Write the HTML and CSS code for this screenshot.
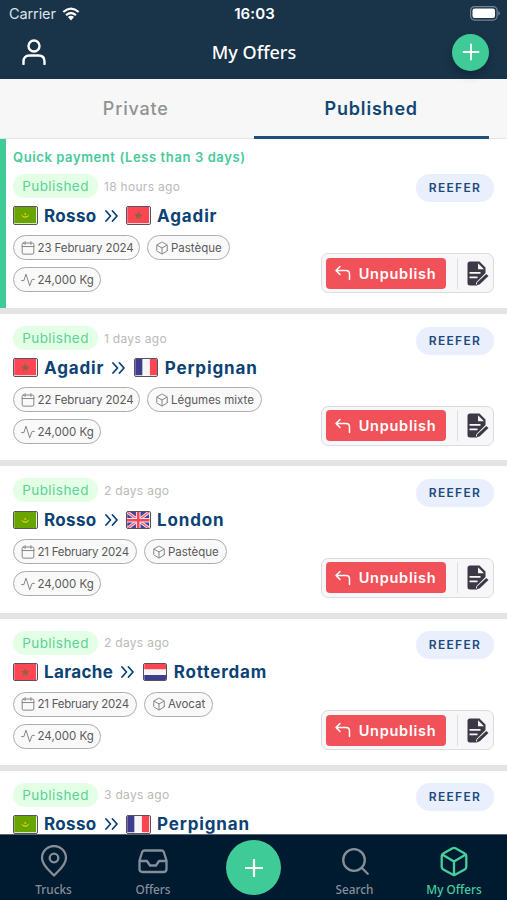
FILE: index.html
```html
<!DOCTYPE html>
<html lang="en">
<head>
    <meta charset="UTF-8">
    <title>My Offers</title>
    <link rel="stylesheet" href="styles.css">
</head>
<body>
    <!-- icons -->
    <svg class="sprite">
        <symbol id="calendar" viewBox="0 0 24 24"><rect x="2" y="3.500" width="20" height="19" rx="2"/><path d="M7 1v5M17 1v5M2 9.500h20"/></symbol>
        <symbol id="box" viewBox="0 0 24 24"><path d="M21 16V8a2 2 0 0 0-1-1.730l-7-4a2 2 0 0 0-2 0l-7 4A2 2 0 0 0 3 8v8a2 2 0 0 0 1 1.730l7 4a2 2 0 0 0 2 0l7-4A2 2 0 0 0 21 16z"/><path d="M3.300 7L12 12l8.700-5M12 22V12"/></symbol>
        <symbol id="pulse" viewBox="0 0 24 24"><path d="M1 13h4L8.500 2l6.500 20 4-11h4"/></symbol>
        <symbol id="chevrons" viewBox="0 0 14 14"><path d="M1 2l4.500 5L1 12M7.500 2L12 7l-4.500 5"/></symbol>
        <symbol id="back" viewBox="0 0 16 16"><path d="M5 1.500L1 5.500l4 4M1 5.500h10q3.500 0 3.500 3.500v5.500"/></symbol>
        <symbol id="edit" viewBox="0 0 22 25">
            <path fill="#3d3845" d="M3 .5h9.500l6 6V13l-7 7.500-1.500 4H3Q.5 24.500.5 22V3Q.5.500 3 .5z"/>
            <path fill="#f7f7f9" d="M11 2.300v6h6zM2.500 11h11v1.700h-11zM2.500 15.500h8v1.700h-8z"/>
            <path stroke="#f7f7f9" stroke-width="5.500" d="M12 22.500l8-8"/>
            <path fill="#3d3845" d="M19.300 13l2.200 2-8.700 8.300-3.300 1.200.9-3.300z"/>
        </symbol>
        <symbol id="mr" viewBox="0 0 24 18"><rect width="24" height="18" fill="#69a500"/><path d="M7.500 8a4.600 4.600 0 0 0 9 0a4.700 3.300 0 0 1-9 0z" fill="#e3cf16"/><circle cx="12" cy="7.500" r="1" fill="#e3cf16"/></symbol>
        <symbol id="ma" viewBox="0 0 24 18"><rect width="24" height="18" fill="#fd4654"/><path d="M12 4.500l1.300 3.100 3.400.2-2.600 2.200.8 3.200-2.900-1.700-2.900 1.700.8-3.200-2.600-2.200 3.400-.2z" fill="#8a6740"/></symbol>
        <symbol id="fr" viewBox="0 0 24 18"><path fill="#403c8e" d="M0 0h8v18H0z"/><path fill="#f5f5f5" d="M8 0h8v18H8z"/><path fill="#fb4553" d="M16 0h8v18h-8z"/></symbol>
        <symbol id="nl" viewBox="0 0 24 18"><path fill="#fb4553" d="M0 0h24v6H0z"/><path fill="#f5f5f5" d="M0 6h24v6H0z"/><path fill="#403c8e" d="M0 12h24v6H0z"/></symbol>
        <symbol id="gb" viewBox="0 0 24 18"><rect width="24" height="18" fill="#45449a"/><path stroke="#f2e6ee" stroke-width="3.400" d="M0 0l24 18M24 0L0 18"/><path stroke="#f4637a" stroke-width="1.500" d="M0 0l24 18M24 0L0 18"/><path stroke="#f2e6ee" stroke-width="5" d="M12 0v18M0 9h24"/><path stroke="#fb4553" stroke-width="2.800" d="M12 0v18M0 9h24"/></symbol>
    </svg>

    <header>
        <div class="status">
            <span class="carrier">Carrier</span>
            <svg class="wifi" viewBox="0 0 18 14"><path d="M1.300 5q7.700-6.800 15.400 0M4 8.200q5-4.400 10 0" fill="none" stroke="#fff" stroke-width="2.200"/><path d="M5.900 10.100q3.100-2.500 6.200 0L9 13.500z" fill="#fff"/></svg>
            <span class="time">16:03</span>
            <svg class="battery" viewBox="0 0 30 15"><rect x=".6" y=".6" width="26.500" height="13.500" rx="4" fill="none" stroke="#778593" stroke-width="1.200"/><rect x="2.500" y="2.500" width="22.500" height="9.500" rx="2" fill="#fff"/><path d="M28.300 5v4.500q1.500-.5 1.500-2.200T28.300 5z" fill="#778593"/></svg>
        </div>
        <div class="bar">
            <svg class="user" viewBox="0 0 24 26"><circle cx="12" cy="7" r="5.500"/><path d="M1.500 25v-2.500q0-6 6-6h9q6 0 6 6V25"/></svg>
            <h1>My Offers</h1>
            <button class="add"><svg viewBox="0 0 18 18"><path d="M9 1.500v15M1.500 9h15"/></svg></button>
        </div>
    </header>

    <div class="tabs">
        <div class="tab">Private</div>
        <div class="tab active">Published</div>
    </div>

    <main>
        <div class="card quick">
            <div class="info">
                <div class="payment">Quick payment (Less than 3 days)</div>
                <div class="state"><span class="badge">Published</span><span class="ago">18 hours ago</span></div>
                <div class="route"><svg class="flag"><use href="#mr"/></svg><b>Rosso</b><svg class="to"><use href="#chevrons"/></svg><svg class="flag"><use href="#ma"/></svg><b class="wide">Agadir</b></div>
                <div class="chips">
                    <span class="chip date"><svg><use href="#calendar"/></svg>23 February 2024</span>
                    <span class="chip goods"><svg><use href="#box"/></svg>Pastèque</span>
                    <span class="chip weight"><svg><use href="#pulse"/></svg>24,000 Kg</span>
                </div>
            </div>
            <div class="side">
                <span class="type">REEFER</span>
                <div class="actions"><button class="unpublish"><svg><use href="#back"/></svg>Unpublish</button><i></i><svg class="edit"><use href="#edit"/></svg></div>
            </div>
        </div>
        <div class="card">
            <div class="info">
                <div class="state"><span class="badge">Published</span><span class="ago">1 days ago</span></div>
                <div class="route"><svg class="flag"><use href="#ma"/></svg><b class="wide">Agadir</b><svg class="to"><use href="#chevrons"/></svg><svg class="flag"><use href="#fr"/></svg><b class="wide">Perpignan</b></div>
                <div class="chips">
                    <span class="chip date"><svg><use href="#calendar"/></svg>22 February 2024</span>
                    <span class="chip goods"><svg><use href="#box"/></svg>Légumes mixte</span>
                    <span class="chip weight"><svg><use href="#pulse"/></svg>24,000 Kg</span>
                </div>
            </div>
            <div class="side">
                <span class="type">REEFER</span>
                <div class="actions"><button class="unpublish"><svg><use href="#back"/></svg>Unpublish</button><i></i><svg class="edit"><use href="#edit"/></svg></div>
            </div>
        </div>
        <div class="card">
            <div class="info">
                <div class="state"><span class="badge">Published</span><span class="ago">2 days ago</span></div>
                <div class="route"><svg class="flag"><use href="#mr"/></svg><b>Rosso</b><svg class="to"><use href="#chevrons"/></svg><svg class="flag"><use href="#gb"/></svg><b class="wide">London</b></div>
                <div class="chips">
                    <span class="chip date short"><svg><use href="#calendar"/></svg>21 February 2024</span>
                    <span class="chip goods"><svg><use href="#box"/></svg>Pastèque</span>
                    <span class="chip weight"><svg><use href="#pulse"/></svg>24,000 Kg</span>
                </div>
            </div>
            <div class="side">
                <span class="type">REEFER</span>
                <div class="actions"><button class="unpublish"><svg><use href="#back"/></svg>Unpublish</button><i></i><svg class="edit"><use href="#edit"/></svg></div>
            </div>
        </div>
        <div class="card">
            <div class="info">
                <div class="state"><span class="badge">Published</span><span class="ago">2 days ago</span></div>
                <div class="route"><svg class="flag"><use href="#ma"/></svg><b>Larache</b><svg class="to"><use href="#chevrons"/></svg><svg class="flag"><use href="#nl"/></svg><b class="wide">Rotterdam</b></div>
                <div class="chips">
                    <span class="chip date short"><svg><use href="#calendar"/></svg>21 February 2024</span>
                    <span class="chip goods"><svg><use href="#box"/></svg>Avocat</span>
                    <span class="chip weight"><svg><use href="#pulse"/></svg>24,000 Kg</span>
                </div>
            </div>
            <div class="side">
                <span class="type">REEFER</span>
                <div class="actions"><button class="unpublish"><svg><use href="#back"/></svg>Unpublish</button><i></i><svg class="edit"><use href="#edit"/></svg></div>
            </div>
        </div>
        <div class="card">
            <div class="info">
                <div class="state"><span class="badge">Published</span><span class="ago">3 days ago</span></div>
                <div class="route"><svg class="flag"><use href="#mr"/></svg><b>Rosso</b><svg class="to"><use href="#chevrons"/></svg><svg class="flag"><use href="#fr"/></svg><b class="wide">Perpignan</b></div>
            </div>
            <div class="side">
                <span class="type">REEFER</span>
            </div>
        </div>
    </main>

    <nav>
        <a><svg viewBox="0 0 28 32"><path d="M14 30.500C10 26 2 20.500 2 13a12 12 0 0 1 24 0c0 7.500-8 13-12 17.500z"/><circle cx="14" cy="13" r="4.300"/></svg>Trucks</a>
        <a><svg viewBox="0 0 30 32"><path d="M1.500 16h7.500l3 4.500h6L21 16h7.500M6.500 5.500h17q1.600 0 2.300 1.500l2.700 8.500v8.500q0 3-3 3h-21q-3 0-3-3v-8.500L4.200 7q.7-1.500 2.300-1.500z"/></svg>Offers</a>
        <button class="plus"><svg viewBox="0 0 18 18"><path d="M9 .5v17M.5 9h17"/></svg></button>
        <a><svg viewBox="0 0 28 32"><circle cx="13" cy="15" r="10.800"/><path d="M20.700 22.700l6 6"/></svg>Search</a>
        <a class="on"><svg viewBox="0 0 28 32"><path d="M12.500 3.300q1.500-.8 3 0l9.200 5.300q1.600.9 1.600 2.700v10.400q0 1.800-1.600 2.700l-9.200 5.200q-1.500.8-3 0l-9.200-5.200q-1.600-.9-1.600-2.700V11.300q0-1.800 1.600-2.700zM2.200 9.600L14 16.400l11.800-6.800M14 30V16.400"/></svg>My Offers</a>
    </nav>
</body>
</html>
```
FILE: styles.css
```css
* {
    box-sizing: border-box;
}
body {
    display: flex;
    flex-direction: column;
    width: 507px;
    height: 900px;
    margin: 0;
    overflow: hidden;
    font-family: Inter, "Liberation Sans", sans-serif;
    background: #fff;
}
svg {
    display: block;
    flex: none;
    fill: none;
    stroke-linecap: round;
    stroke-linejoin: round;
}
.sprite {
    position: absolute;
    width: 0;
    height: 0;
}
button {
    display: flex;
    align-items: center;
    justify-content: center;
    padding: 0;
    border: 0;
    font-family: inherit;
    color: #fff;
}
header {
    flex: none;
    height: 79px;
    background: #193349;
    color: #fff;
}
.status {
    display: grid;
    grid-template-columns: 53px 1fr auto 1fr 30px;
    align-items: center;
    height: 27px;
    padding: 0 7px 0 9px;
}
.carrier {
    font-size: 14.500px;
    letter-spacing: -0.1px;
    color: #dbe2e8;
}
.wifi {
    width: 18px;
    height: 14px;
}
.wifi path {
    stroke-linecap: butt;
}
.time {
    margin-right: 23px;
    font-size: 15px;
    font-weight: 600;
    letter-spacing: 0.1px;
}
.battery {
    grid-column: 5;
    width: 30px;
    height: 15px;
}
.bar {
    display: grid;
    grid-template-columns: 37px 1fr 37px;
    align-items: center;
    height: 50px;
    padding: 0 18px 0 22px;
}
.user {
    width: 24px;
    height: 26px;
    stroke: #fff;
    stroke-width: 2.400;
}
h1 {
    margin: 0 3px 0 0;
    font: 500 18px "Noto Sans", sans-serif;
    text-align: center;
}
.add {
    width: 37px;
    height: 37px;
    border-radius: 50%;
    background: #3ecb98;
    box-shadow: 0 5px 8px rgba(0, 0, 0, 0.22);
    z-index: 1;
}
.add svg {
    width: 18px;
    stroke: #fff;
    stroke-width: 1.800;
}
.tabs {
    display: flex;
    flex: none;
    height: 60px;
    padding: 0 18px;
    background: #f7f7f7;
    border-bottom: 1px solid #e4e4e4;
}
.tab {
    flex: 1;
    padding-top: 18px;
    font-size: 18px;
    line-height: 23px;
    font-weight: 500;
    letter-spacing: 0.8px;
    text-align: center;
    color: #929292;
}
.active {
    height: 60px;
    border-bottom: 3px solid #1e4f7d;
    color: #134674;
    font-weight: 600;
}
main {
    flex: 1;
    min-height: 0;
    overflow: hidden;
    background: #e4e4e4;
}
.card {
    display: flex;
    justify-content: space-between;
    height: 146.300px;
    margin-bottom: 6px;
    padding: 12px 13px 0 13px;
    background: #fff;
}
.quick {
    height: 169px;
    padding: 11px 13px 0 7px;
    border-left: 6px solid #3fca98;
}
.info {
    width: 270px;
    flex: none;
}
.payment {
    height: 24px;
    font-size: 13px;
    font-weight: 600;
    line-height: 14px;
    letter-spacing: 0.6px;
    white-space: nowrap;
    color: #46ca9b;
}
.state {
    display: flex;
    align-items: center;
    height: 24px;
}
.badge {
    width: 85px;
    height: 24px;
    border-radius: 12px;
    background: #e3ffe6;
    color: #5cd296;
    font-size: 13.500px;
    line-height: 24px;
    letter-spacing: 0.45px;
    text-align: center;
}
.ago {
    margin-left: 6px;
    font-size: 12px;
    letter-spacing: 0.3px;
    color: #b9b9b9;
}
.route {
    display: flex;
    align-items: center;
    height: 35px;
}
.route b {
    margin-left: 6.500px;
    font-size: 17px;
    font-weight: 700;
    letter-spacing: 0.35px;
    color: #0c4275;
}
.route .wide {
    letter-spacing: 0.850px;
}
.flag {
    width: 24.500px;
    height: 18.500px;
    border: 1px solid #565261;
    border-radius: 2px;
}
.to {
    width: 14px;
    height: 14px;
    margin: 0 7.500px 0 8px;
    stroke: #0c4275;
    stroke-width: 1.800;
}
.chips {
    display: flex;
    flex-wrap: wrap;
    gap: 7px 6.500px;
    margin-top: 2px;
}
.chip {
    display: flex;
    align-items: center;
    height: 25px;
    padding: 0 7px;
    border: 1px solid #adadad;
    border-radius: 13px;
    background: #f9f9fa;
    color: #5a5a5a;
    font-size: 11.500px;
    white-space: nowrap;
}
.chip svg {
    width: 14px;
    height: 14px;
    margin-right: 2.500px;
    stroke: #858585;
    stroke-width: 1.700;
}
.date {
    width: 127px;
    letter-spacing: -0.1px;
}
.short {
    width: 124px;
    letter-spacing: -0.25px;
}
.weight {
    width: 87.500px;
}
.side {
    display: flex;
    flex-direction: column;
    justify-content: space-between;
    align-items: flex-end;
    height: 119.500px;
    padding-top: 0.5px;
}
.quick .side {
    height: 143px;
    padding-top: 24px;
}
.type {
    width: 78px;
    height: 28px;
    border-radius: 14px;
    background: #e9effd;
    color: #1c4a7b;
    font-size: 12px;
    font-weight: 600;
    line-height: 28px;
    letter-spacing: 1.300px;
    text-align: center;
}
.actions {
    display: flex;
    align-items: center;
    width: 173px;
    height: 40px;
    padding-left: 3.500px;
    border: 1px solid #dcdcdc;
    border-radius: 7px;
    background: #f7f7f9;
}
.unpublish {
    width: 120px;
    height: 31px;
    border-radius: 4px;
    background: #f15158;
    font-size: 14.500px;
    font-weight: 600;
    letter-spacing: 0.75px;
}
.unpublish svg {
    width: 16px;
    height: 16px;
    margin-right: 8px;
    stroke: #fff;
    stroke-width: 1.500;
}
.actions i {
    width: 1px;
    height: 31px;
    margin: 0 9px 0 11px;
    background: #dedede;
}
.edit {
    width: 22px;
    height: 25px;
}
nav {
    display: grid;
    grid-template-columns: 107px 92px 109px 93px 106px;
    flex: none;
    height: 66px;
    border-top: 1px solid #5a6775;
    background: #001a2f;
}
nav a {
    display: flex;
    flex-direction: column;
    align-items: center;
    padding-top: 10px;
    color: #858f99;
    font: 500 11.800px/18px "Noto Sans", sans-serif;
}
nav a svg {
    height: 32px;
    margin-bottom: 3px;
    stroke: #858f99;
    stroke-width: 2.300;
}
nav .on {
    color: #45cf9e;
}
nav .on svg {
    stroke: #45cf9e;
}
.plus {
    width: 55px;
    height: 55px;
    margin: 5px auto 0;
    border-radius: 50%;
    background: #3ecb98;
}
.plus svg {
    width: 18px;
    stroke: #fff;
    stroke-width: 2.200;
}
```
